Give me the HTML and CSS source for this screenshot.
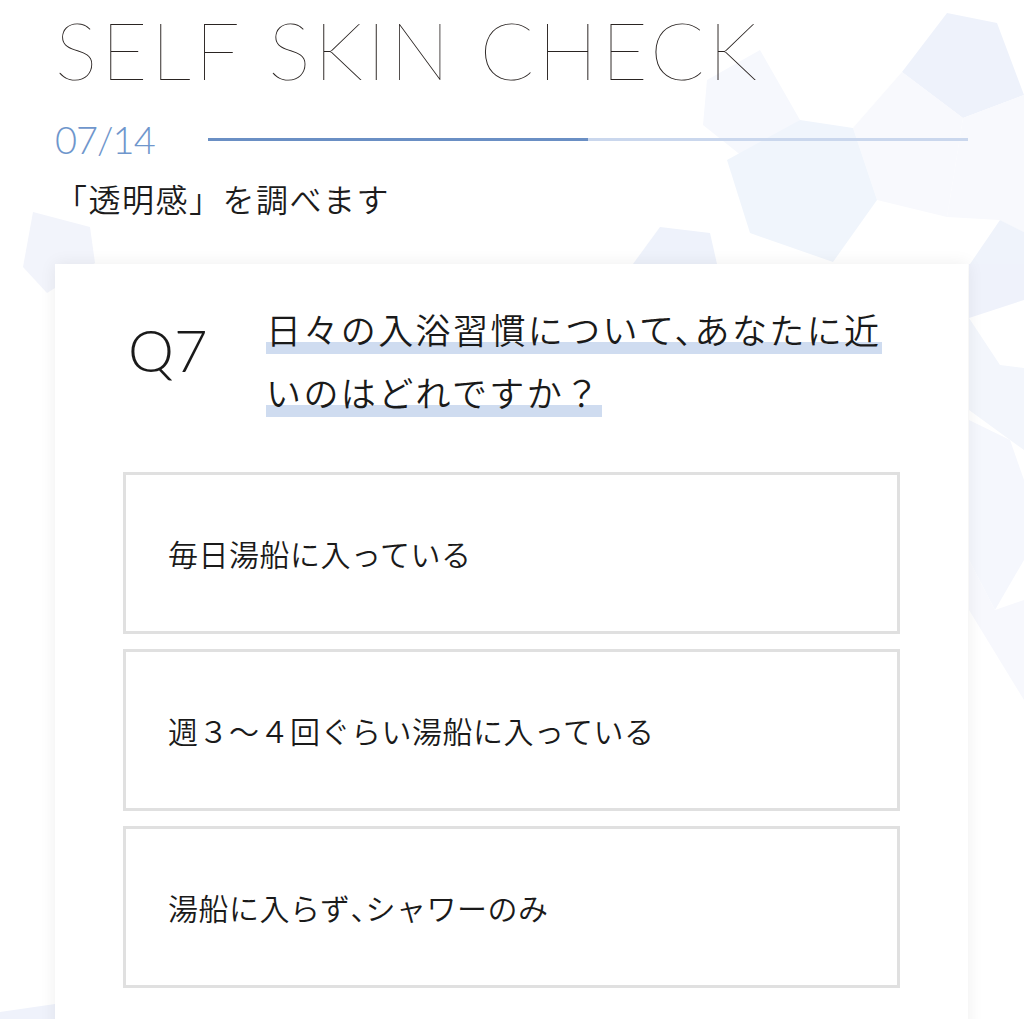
FILE: index.html
```html
<!DOCTYPE html>
<html lang="ja">
<head>
<meta charset="utf-8">
<title>SELF SKIN CHECK</title>
<link rel="stylesheet" href="styles.css">
</head>
<body>
<svg class="bg" width="1024" height="1019" viewBox="0 0 1024 1019" aria-hidden="true">
  <polygon points="947,13 997,23 1024,95 963,118 902,72" fill="#eef2fb"/>
  <polygon points="707,80 760,50 800,120 762,172 703,125" fill="#f6f8fd"/>
  <polygon points="902,72 963,118 947,217 877,200 853,128" fill="#f8f9fd"/>
  <polygon points="800,120 853,128 877,200 833,262 750,233 727,160" fill="#f0f5fc"/>
  <polygon points="633,264 660,227 710,233 717,264" fill="#eef2fb"/>
  <polygon points="963,118 1024,95 1024,232 1000,220 947,217" fill="#f8f9fd"/>
  <polygon points="970,264 1000,220 1024,232 1024,264" fill="#eff3fb"/>
  <polygon points="33,212 90,227 95,263 47,293 23,267" fill="#f2f4fb"/>
  <polygon points="969,264 1024,264 1024,300 969,318" fill="#eff2fb"/>
  <polygon points="969,318 1000,365 1024,368 1024,450 969,410" fill="#f3f6fc"/>
  <polygon points="969,420 1010,440 1024,480 1024,560 995,610 969,560" fill="#f5f7fd"/>
  <polygon points="969,560 995,610 1024,600 1024,700 969,610" fill="#f7f8fd"/>
  <polygon points="0,1019 0,1012 55,1004 55,1019" fill="#eff2fb"/>
</svg>
<main class="page">
  <h1 class="title">SELF SKIN CHECK</h1>
  <div class="progress">
    <span class="counter">07/14</span>
    <div class="bar"><div class="bar-fill" style="width:50%"></div></div>
  </div>
  <p class="lead">「透明感」を調べます</p>
  <section class="card">
    <div class="question">
      <span class="qnum">Q7</span>
      <p class="qtext"><span class="hl">日々の入浴習慣について、あなたに近いのはどれですか？</span></p>
    </div>
    <ul class="options">
      <li class="option">毎日湯船に入っている</li>
      <li class="option">週３～４回ぐらい湯船に入っている</li>
      <li class="option">湯船に入らず<span class="comma">、</span>シャワーのみ</li>
    </ul>
  </section>
</main>
</body>
</html>
```
FILE: styles.css
```css
html, body {
  margin: 0;
  padding: 0;
  background: #ffffff;
}
body {
  font-family: "Noto Sans CJK JP", "Noto Sans", sans-serif;
  color: #1c1c1c;
  position: relative;
  overflow: hidden;
}
.bg {
  position: absolute;
  left: 0;
  top: 0;
  z-index: 0;
}
.page {
  position: relative;
  z-index: 1;
  padding: 9px 56px 0 55px;
}
.title {
  margin: 0;
  font-family: "Lato", sans-serif;
  font-weight: 100;
  font-size: 80px;
  line-height: 80px;
  letter-spacing: 3.6px;
  color: #2a2422;
  white-space: nowrap;
}
.progress {
  display: flex;
  align-items: center;
  gap: 55px;
  margin-top: 30px;
  height: 40px;
}
.counter {
  font-family: "Lato", sans-serif;
  font-weight: 300;
  font-size: 38px;
  line-height: 40px;
  letter-spacing: -1px;
  color: #6f96cc;
  width: 98px;
}
.bar {
  flex: 1;
  height: 3px;
  background: #cad7ed;
}
.bar-fill {
  height: 100%;
  background: #6a8fc4;
}
.lead {
  margin: 16px 0 0;
  font-size: 32px;
  font-weight: 350;
  line-height: 46px;
  letter-spacing: 1.5px;
  color: #1c1c1c;
}
.card {
  margin-top: 43px;
  background: #ffffff;
  box-shadow: 0 0 16px rgba(0, 0, 0, 0.07);
  padding: 33px 68px 60px 68px;
}
.question {
  display: flex;
  align-items: flex-start;
}
.qnum {
  font-family: "Lato", sans-serif;
  font-weight: 300;
  font-size: 58px;
  line-height: 70px;
  color: #1a1a1a;
  margin: 18px 0 0 5px;
  width: 138px;
  flex: none;
}
.qtext {
  margin: 0;
  font-size: 35px;
  font-weight: 350;
  line-height: 63px;
  letter-spacing: 2.4px;
  font-feature-settings: "halt";
  color: #1a1a1a;
}
.hl {
  background: linear-gradient(transparent 76%, #cfdcf0 76%);
}
.comma {
  font-feature-settings: "halt";
  letter-spacing: 0;
}
.options {
  list-style: none;
  margin: 49px 0 0;
  padding: 0;
  display: flex;
  flex-direction: column;
  gap: 15px;
}
.option {
  box-sizing: border-box;
  height: 162px;
  border: 3px solid #e0e0e0;
  display: flex;
  align-items: center;
  padding-left: 42px;
  font-size: 30px;
  font-weight: 350;
  letter-spacing: 0.5px;
  color: #1a1a1a;
}
```
